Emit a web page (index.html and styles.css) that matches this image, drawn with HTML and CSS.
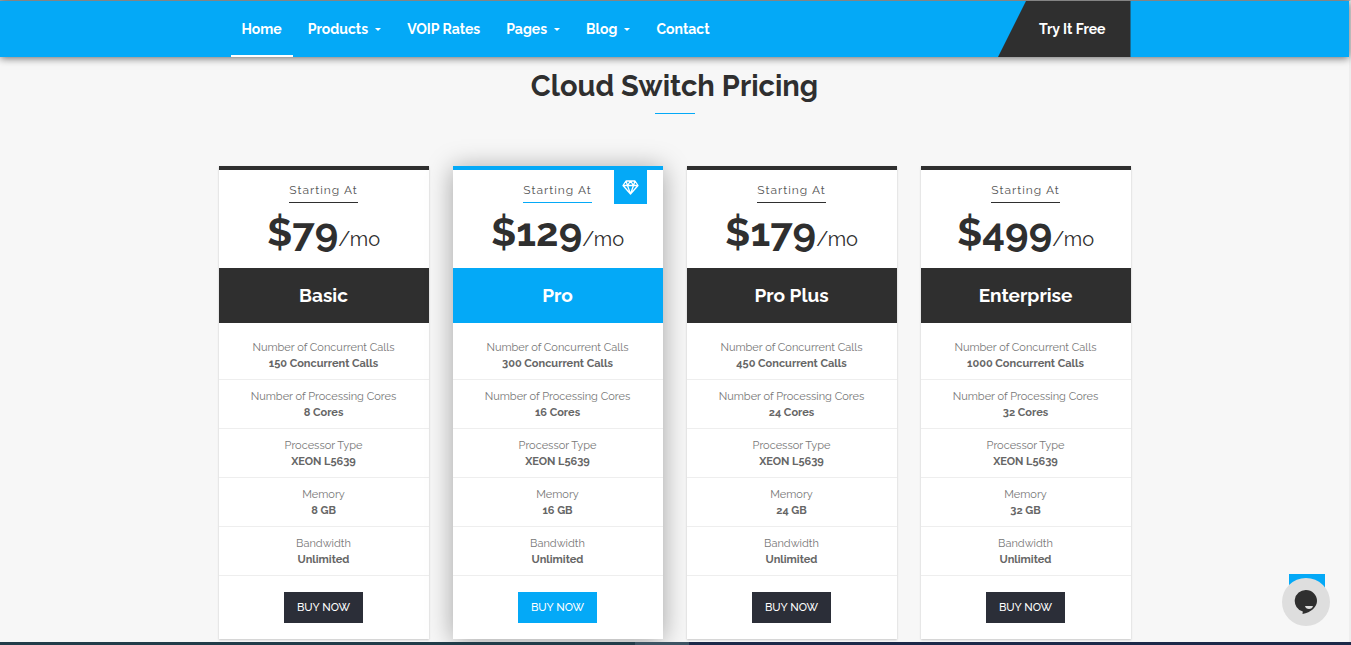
FILE: index.html
```html
<!DOCTYPE html>
<html lang="en">
<head>
<meta charset="utf-8">
<meta name="viewport" content="width=device-width, initial-scale=1">
<title>Cloud Switch Pricing</title>
<link rel="stylesheet" href="styles.css">
</head>
<body>
<div class="page">
  <header class="header">
    <div class="container header-inner">
      <nav class="nav" aria-label="Main">
        <a class="nav-link active" href="#">Home</a>
        <a class="nav-link" href="#">Products<span class="caret"></span></a>
        <a class="nav-link" href="#">VOIP Rates</a>
        <a class="nav-link" href="#">Pages<span class="caret"></span></a>
        <a class="nav-link" href="#">Blog<span class="caret"></span></a>
        <a class="nav-link" href="#">Contact</a>
      </nav>
      <a class="try" href="#">Try It Free</a>
    </div>
  </header>
  <main class="container main">
    <h1 class="heading">Cloud Switch Pricing</h1>
    <div class="plans">
      <article class="plan">
        <div class="plan-top"><span class="starting">Starting At</span><p class="price"><strong>$79</strong>/mo</p></div>
        <h2 class="plan-name">Basic</h2>
        <ul class="features">
          <li>Number of Concurrent Calls<b>150 Concurrent Calls</b></li>
          <li>Number of Processing Cores<b>8 Cores</b></li>
          <li>Processor Type<b>XEON L5639</b></li>
          <li>Memory<b>8 GB</b></li>
          <li>Bandwidth<b>Unlimited</b></li>
        </ul>
        <button class="buy" type="button">BUY NOW</button>
      </article>
      <article class="plan featured">
        <span class="badge"><svg width="17" height="15" viewBox="0 0 17 15" fill="none" stroke="#fff" stroke-width="1.3" stroke-linejoin="round"><path d="M4 1h9l3 4.500-7.500 8.500L1 5.500zM1 5.500h15M4 1l1.500 4.500 3 8.500 3-8.500L13 1M5.500 5.500l3-4.500 3 4.500"/></svg></span>
        <div class="plan-top"><span class="starting">Starting At</span><p class="price"><strong>$129</strong>/mo</p></div>
        <h2 class="plan-name">Pro</h2>
        <ul class="features">
          <li>Number of Concurrent Calls<b>300 Concurrent Calls</b></li>
          <li>Number of Processing Cores<b>16 Cores</b></li>
          <li>Processor Type<b>XEON L5639</b></li>
          <li>Memory<b>16 GB</b></li>
          <li>Bandwidth<b>Unlimited</b></li>
        </ul>
        <button class="buy" type="button">BUY NOW</button>
      </article>
      <article class="plan">
        <div class="plan-top"><span class="starting">Starting At</span><p class="price"><strong>$179</strong>/mo</p></div>
        <h2 class="plan-name">Pro Plus</h2>
        <ul class="features">
          <li>Number of Concurrent Calls<b>450 Concurrent Calls</b></li>
          <li>Number of Processing Cores<b>24 Cores</b></li>
          <li>Processor Type<b>XEON L5639</b></li>
          <li>Memory<b>24 GB</b></li>
          <li>Bandwidth<b>Unlimited</b></li>
        </ul>
        <button class="buy" type="button">BUY NOW</button>
      </article>
      <article class="plan">
        <div class="plan-top"><span class="starting">Starting At</span><p class="price"><strong>$499</strong>/mo</p></div>
        <h2 class="plan-name">Enterprise</h2>
        <ul class="features">
          <li>Number of Concurrent Calls<b>1000 Concurrent Calls</b></li>
          <li>Number of Processing Cores<b>32 Cores</b></li>
          <li>Processor Type<b>XEON L5639</b></li>
          <li>Memory<b>32 GB</b></li>
          <li>Bandwidth<b>Unlimited</b></li>
        </ul>
        <button class="buy" type="button">BUY NOW</button>
      </article>
    </div>
  </main>
</div>
<footer class="footer"></footer>
<a class="to-top" href="#" aria-label="Back to top"></a>
<button class="chat" type="button" aria-label="Chat">
  <svg width="24" height="26" viewBox="0 0 24 26"><path fill="#2f2f2f" d="M12 1a11 11 0 0 1 11 11c0 6-6 11.500-14.500 13l.3-2.400A11 11 0 0 1 12 1z"/><path fill="#dedede" d="M11 17h8c-.4 2-2 3-4 3s-3.700-1-4-3z"/></svg>
</button>
</body>
</html>
```

FILE: styles.css
```css
* {
  box-sizing: border-box;
}

body {
  margin: 0;
  background: #f7f7f7;
  color: #2f2f2f;
  font-family: Raleway, Lato, "Open Sans", sans-serif;
}

.page {
  padding-bottom: 3px;
  border-top: 1px solid #a9a9a9;
  border-right: 2px solid #eeeeee;
}

.container {
  max-width: 912px;
  margin: 0 auto;
}

.header {
  background: #04a9f7;
  box-shadow: 0 1px 8px rgba(0, 0, 0, 0.6);
}

.header-inner {
  display: flex;
  justify-content: space-between;
  height: 56px;
}

.nav {
  display: flex;
  gap: 4px;
  padding-left: 12px;
}

.nav-link {
  display: flex;
  align-items: center;
  padding: 2px 11px 0;
  border-bottom: 2px solid transparent;
  color: #fff;
  font-size: 14px;
  font-weight: 700;
  text-decoration: none;
}

.nav-link.active {
  border-color: #fff;
}

.caret {
  margin-left: 7px;
  border: 3px solid transparent;
  border-top-color: #fff;
  border-bottom: 0;
}

.try {
  display: flex;
  align-items: center;
  padding: 0 25px 0 41px;
  background: #2f2f2f;
  clip-path: polygon(28px 0, 100% 0, 100% 100%, 0 100%);
  color: #fff;
  font-size: 14px;
  font-weight: 700;
  text-decoration: none;
}

.heading {
  margin: 0;
  padding-top: 9px;
  font-size: 29px;
  line-height: 40px;
  font-weight: 700;
  text-align: center;
}

.heading::after {
  content: "";
  display: block;
  width: 40px;
  height: 1px;
  margin: 7px auto 0;
  background: #04a9f7;
}

.plans {
  display: grid;
  grid-template-columns: repeat(4, 1fr);
  gap: 24px;
  margin-top: 52px;
}

.plan {
  position: relative;
  padding-bottom: 16px;
  border-top: 4px solid #2f2f2f;
  background: #fff;
  box-shadow: 0 1px 2px rgba(0, 0, 0, 0.2);
  text-align: center;
}

.plan-top {
  height: 98px;
  padding-top: 9px;
}

.starting {
  display: inline-block;
  padding-bottom: 2px;
  border-bottom: 1px solid #2f2f2f;
  color: #555;
  font-size: 12px;
  line-height: 20px;
  letter-spacing: 1px;
}

.price {
  margin: 0;
  font-size: 20px;
  line-height: 58px;
}

.price strong {
  font-size: 40px;
}

.plan-name {
  margin: 0 0 8px;
  background: #2f2f2f;
  color: #fff;
  font-size: 19px;
  line-height: 55px;
}

.features {
  margin: 0 0 16px;
  padding: 0;
  list-style: none;
}

.features li {
  padding: 9px 0 7px;
  border-bottom: 1px solid #eee;
  color: #777;
  font-size: 11px;
  line-height: 16px;
}

.features b {
  display: block;
  color: #666;
}

.buy {
  height: 31px;
  padding: 0 13px;
  border: 0;
  background: #2b2e38;
  color: #fff;
  font-family: inherit;
  font-size: 11px;
  font-weight: 500;
}

.featured {
  border-color: #04a9f7;
  box-shadow: 0 2px 24px rgba(0, 0, 0, 0.35);
}

.featured .starting {
  border-color: #04a9f7;
}

.featured .plan-name,
.featured .buy {
  background: #04a9f7;
}

.badge {
  position: absolute;
  top: 0;
  right: 16px;
  display: grid;
  place-items: center;
  width: 33px;
  height: 34px;
  background: #04a9f7;
}

.footer {
  position: relative;
  height: 3px;
  background: linear-gradient(90deg, #213c49 47%, #3d5464 47%, #3d5464 51%, #1c2949 51%);
}

.to-top {
  position: fixed;
  right: 26px;
  bottom: 35px;
  width: 36px;
  height: 36px;
  background: #04a9f7;
}

.chat {
  position: fixed;
  right: 21px;
  bottom: 19px;
  display: grid;
  place-items: center;
  width: 48px;
  height: 48px;
  padding: 0;
  border: 0;
  border-radius: 50%;
  background: #dedede;
}
```
